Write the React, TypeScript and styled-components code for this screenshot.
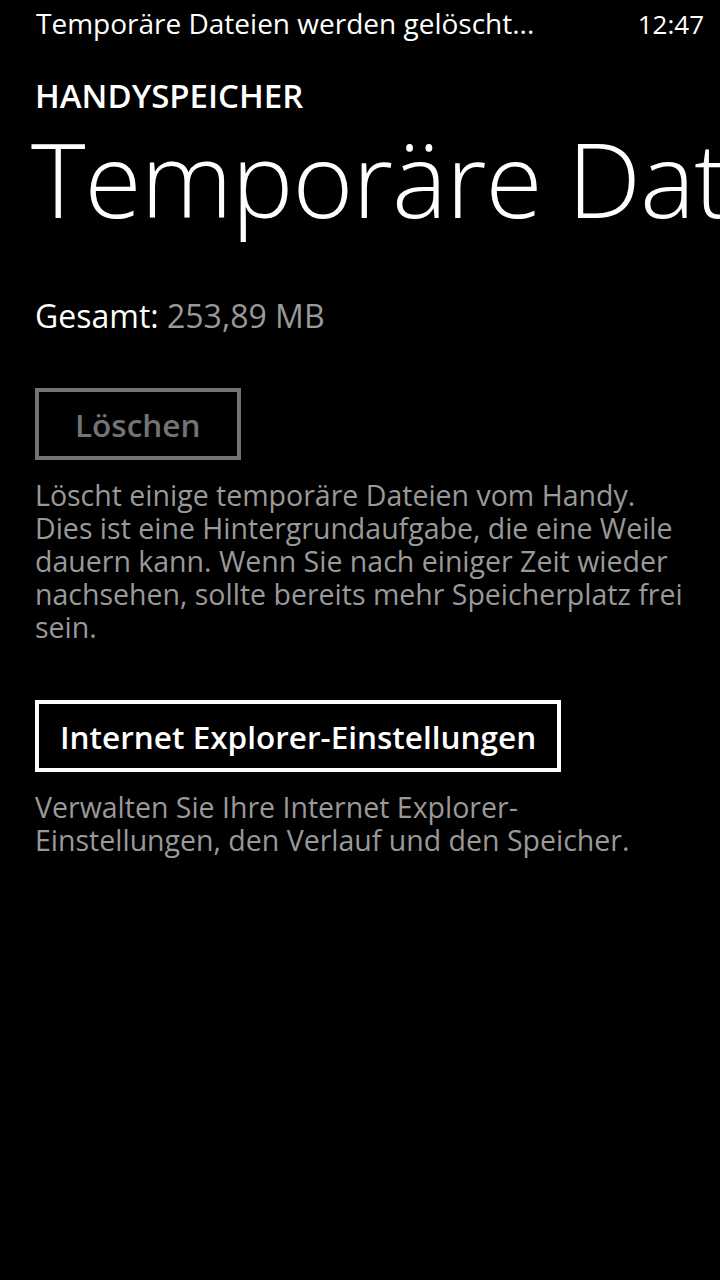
import React from "react";
import styled, { createGlobalStyle } from "styled-components";

const Global = createGlobalStyle`
  html, body { margin: 0; padding: 0; background: #000; }
  body { width: 720px; height: 1280px; overflow: hidden; font-family: "Open Sans", "Noto Sans", sans-serif; color: #fff; }
`;

const Screen = styled.div`
  width: 720px;
  height: 1280px;
  background: #000;
  overflow: hidden;
  display: flex;
  flex-direction: column;
`;

const StatusBar = styled.div`
  display: flex;
  justify-content: space-between;
  align-items: baseline;
  padding: 4px 16px 0 36px;
  height: 50px;
  box-sizing: border-box;
`;

const StatusText = styled.span<{ $size?: number }>`
  font-size: ${(p) => p.$size ?? 28}px;
  line-height: 38px;
  color: #fff;
  white-space: nowrap;
`;

const Content = styled.div`
  display: flex;
  flex-direction: column;
  padding-left: 35px;
`;

const AppTitle = styled.div`
  font-size: 33px;
  font-weight: 600;
  line-height: 40px;
  margin-top: 26px;
`;

const PageTitle = styled.div`
  font-size: 104px;
  font-weight: 300;
  line-height: 110px;
  white-space: nowrap;
  margin-left: -4px;
  margin-top: 7px;
  letter-spacing: -1px;
`;

const TotalRow = styled.div`
  font-size: 32px;
  line-height: 40px;
  margin-top: 63px;
`;

const Muted = styled.span`
  color: #999;
`;

const Button = styled.div<{ $disabled?: boolean; $gap: number; $padX: number }>`
  align-self: flex-start;
  box-sizing: border-box;
  height: 72px;
  margin-top: ${(p) => p.$gap}px;
  border: 4px solid ${(p) => (p.$disabled ? "#737373" : "#fff")};
  color: ${(p) => (p.$disabled ? "#737373" : "#fff")};
  padding: 0 ${(p) => p.$padX}px;
  display: flex;
  align-items: center;
  font-size: 31.5px;
  font-weight: 600;
  white-space: nowrap;
`;

const Description = styled.p`
  margin: 19px 0 0;
  color: #999;
  font-size: 28.5px;
  line-height: 33px;
  padding-right: 20px;
`;

export default function App() {
  return (
    <Screen>
      <Global />
      <StatusBar>
        <StatusText>Temporäre Dateien werden gelöscht...</StatusText>
        <StatusText $size={26}>12:47</StatusText>
      </StatusBar>
      <Content>
        <AppTitle>HANDYSPEICHER</AppTitle>
        <PageTitle>Temporäre Dateien</PageTitle>
        <TotalRow>
          Gesamt: <Muted>253,89 MB</Muted>
        </TotalRow>
        <Button $disabled $gap={52} $padX={36}>Löschen</Button>
        <Description>
          Löscht einige temporäre Dateien vom Handy. Dies ist eine Hintergrundaufgabe, die eine Weile dauern kann. Wenn Sie nach einiger Zeit wieder nachsehen, sollte bereits mehr Speicherplatz frei sein.
        </Description>
        <Button $gap={56} $padX={21}>Internet Explorer-Einstellungen</Button>
        <Description>
          Verwalten Sie Ihre Internet Explorer-Einstellungen, den Verlauf und den Speicher.
        </Description>
      </Content>
    </Screen>
  );
}
